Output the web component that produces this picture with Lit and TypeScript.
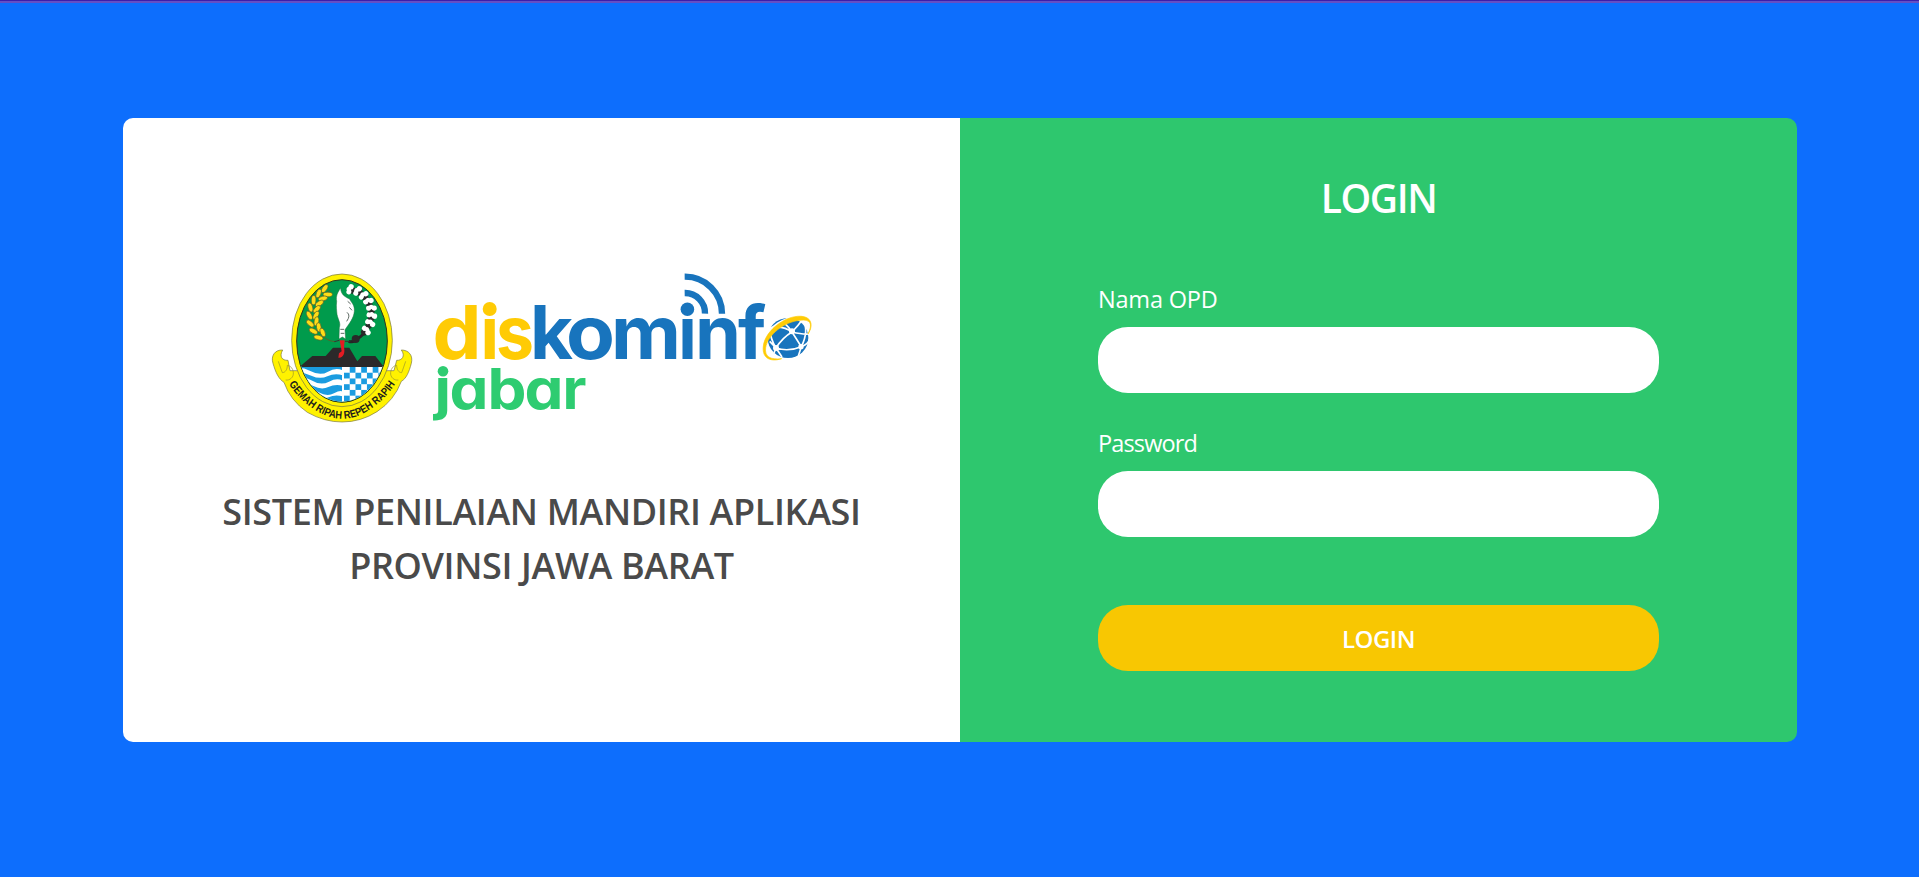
import { LitElement, html, svg, css } from "lit";
import { customElement } from "lit/decorators.js";

/** One letter of the wordmark: character, left edge, width, baseline, font size. */
type Glyph = [string, number, number, number, number];

const YELLOW: Glyph[] = [
  ["d", 432.5, 49, 358.6, 74],
  ["i", 480.5, 18.5, 358.6, 74],
  ["s", 496, 38, 358.6, 74],
];
const BLUE: Glyph[] = [
  ["k", 530, 43, 358.6, 74],
  ["o", 566, 49, 358.6, 74],
  ["m", 611, 70, 358.6, 74],
  ["i", 678.2, 18.5, 358.6, 74],
  ["n", 695, 46, 358.6, 74],
  ["f", 738, 28, 358.6, 74],
];
const GREEN: Glyph[] = [
  ["j", 434.5, 16.5, 409.3, 56],
  ["a", 449.5, 39, 409.3, 56],
  ["b", 487.5, 39, 409.3, 56],
  ["a", 524.5, 39, 409.3, 56],
  ["r", 562.5, 24, 409.3, 56],
];

@customElement("diskominfo-logo")
export class DiskominfoLogo extends LitElement {
  static styles = css`
    :host { display: block; width: 559px; height: 170px; }
    .logo { display: block; width: 100%; height: 100%; }
    .word { font-family: Inter, "Liberation Sans", sans-serif; font-weight: 700; font-feature-settings: "cv11" 1; }
    .yellow { fill: #ffcb05; }
    .blue { fill: #1874bd; }
    .green { fill: #2ecc71; }
    .motto { font-family: "Liberation Sans", sans-serif; font-weight: 700; font-size: 33px; fill: #1d1d1b; }
  `;

  private letters(list: Glyph[], tone: string) {
    return list.map(([ch, x, w, y, size]) => svg`<text class="word ${tone}" x=${x} y=${y}
      font-size=${size} textLength=${w} lengthAdjust="spacingAndGlyphs">${ch}</text>`);
  }

  private checks() {
    const cells = [];
    for (let r = 0; r < 7; r++)
      for (let c = 0; c < 9; c++)
        if ((r + c) % 2 === 1)
          cells.push(svg`<rect x=${246 + c * 17.2} y=${309 + r * 17.2} width="17.2" height="17.2" fill="#1b9ce0"/>`);
    return cells;
  }

  private emblem() {
    const rice = [[190, 84, 62], [174, 98, 50], [162, 116, 30], [154, 136, 15], [152, 157, 0], [155, 178, -20], [164, 198, -35], [178, 215, -50]];
    const cotton = [[268, 78, 20], [290, 84, 35], [307, 98, 50], [320, 116, 70], [328, 137, 85], [328, 159, 100], [322, 181, 115], [309, 202, 135]];
    return svg`<g transform="translate(262 264) scale(.33333)">
      <defs>
        <clipPath id="shield"><ellipse cx="240" cy="231" rx="134" ry="182"/></clipPath>
        <path id="band" d="M80 360Q113 408 155 435Q197 464 240 464Q285 464 325 435Q371 406 406 350"/>
      </defs>
      <path d="M62 258C38 257 26 276 33 298C41 326 50 345 66 355Q85 410 136 445Q187 474 240 474Q297 474 345 443Q397 409 418 352C433 344 441 324 448 298C454 274 440 258 418 258C431 276 420 290 404 289L396 320L84 320L78 289C60 290 51 277 62 258Z"
        fill="#fff200" stroke="#77743a" stroke-width="2"/>
      <ellipse cx="240" cy="229" rx="151" ry="199" fill="#fff200" stroke="#6f7048" stroke-width="2"/>
      <ellipse cx="240" cy="231" rx="136" ry="184" fill="#009b4c" stroke="#31351c" stroke-width="3"/>
      <path d="M49 292Q55 310 61 326C70 326 76 316 76 304Q92 307 94 325C96 340 83 350 71 348M431 292Q425 310 419 326C410 326 404 316 404 304Q388 307 386 325C384 340 397 350 409 348" fill="none" stroke="#99942d" stroke-width="2"/>
      <g clip-path="url(#shield)">
        <rect x="90" y="307" width="300" height="115" fill="#fff"/>
        <rect x="90" y="307" width="150" height="115" fill="#1b9ce0"/>
        <path d="M90 315Q115 305 145 321T198 323T242 319V334Q218 327 196 337T148 335T90 326ZM90 345Q125 334 151 350T201 353T242 350V365Q219 359 199 369T154 366T90 357ZM120 378Q145 371 170 385T216 388T242 384V397Q218 391 200 400T152 397Z" fill="#fff"/>
        ${this.checks()}
        <path d="M112 309L151 276H191L213 251H262L286 292L300 276H340L366 309Z" fill="#2b292a"/>
      </g>
      <path d="M233 229H248L246 250C250 268 244 283 229 281L231 268L239 262Z" fill="#e31b23"/>
      <path d="M236 72C227 85 221 96 224 112C222 129 224 138 225 151C229 170 237 177 232 191L231 225L241 219L251 225L249 197C263 177 275 163 277 142C279 122 266 114 263 105C249 99 236 91 236 72Z" fill="#fff" stroke="#1c713d" stroke-width="1.5"/>
      <path d="M257 112L266 120M262 130L270 139M255 145Q267 154 254 172M235 196H246M236 208H247" fill="none" stroke="#5f6b64" stroke-width="3"/>
      <path d="M205 78C158 104 145 166 179 212Q193 231 220 233" fill="none" stroke="#57612a" stroke-width="3"/>
      ${rice.map(([x, y, a]) => svg`<g transform="translate(${x} ${y}) rotate(${a})" fill="#ffdd17" stroke="#55612b" stroke-width="2">
        <ellipse cx="-10" cy="-3" rx="7" ry="14" transform="rotate(-28 -10 -3)"/>
        <ellipse cx="10" cy="-3" rx="7" ry="14" transform="rotate(28 10 -3)"/></g>`)}
      <path d="M260 232Q272 237 284 226Q331 197 329 143Q323 93 277 76" fill="none" stroke="#252525" stroke-width="9"/>
      ${cotton.map(([x, y, a]) => svg`<g transform="translate(${x} ${y}) rotate(${a})">
        <circle r="10" cx="3" fill="#292929"/>
        <g fill="#fff"><circle cx="-4" cy="-9" r="8"/><circle cx="-5" cy="8" r="7.5"/><circle cx="-8" r="7"/></g></g>`)}
      <circle cx="281" cy="225" r="12" fill="#292929"/>
      <path d="M217 233L232 229M249 232H265" stroke="#333" stroke-width="3"/>
      <text class="motto" textLength="396" lengthAdjust="spacingAndGlyphs"><textPath href="#band">GEMAH RIPAH REPEH RAPIH</textPath></text>
    </g>`;
  }

  private globe() {
    return svg`<g transform="translate(620 260) scale(.33333)" fill="none">
      <path d="M194 50A111 111 0 0 1 306 161M194 99A60 60 0 0 1 255 161" stroke="#1874bd" stroke-width="19"/>
      <ellipse cx="504" cy="234" rx="61" ry="60" fill="#1874bd"/>
      <path d="M449 203Q492 196 516 216Q535 197 548 178M516 216Q549 224 566 222M516 216L544 260Q565 253 569 236M516 216Q487 233 468 264Q505 276 544 260L535 288M492 188Q507 202 516 216M449 244L468 264L462 279M468 264L486 291M449 203Q451 238 468 264M548 178Q568 212 544 260" stroke="#fff" stroke-width="5"/>
      <g fill="#fff"><circle cx="516" cy="214" r="9"/><circle cx="468" cy="264" r="9"/><circle cx="543" cy="260" r="8"/></g>
      <path d="M427 265C432 204 500 157 568 177" stroke="#fff" stroke-width="7"/>
      <path d="M485 296C455 306 425 298 430 258C436 208 505 160 552 170C578 176 578 202 564 222C580 190 570 177 540 181C492 185 443 225 437 263C433 290 451 300 485 296Z" fill="#ffcb05" stroke="#ffcb05" stroke-width="2"/>
    </g>`;
  }

  render() {
    return html`<svg class="logo" viewBox="262 264 559 170" role="img" aria-label="diskominfo jabar">
      ${this.emblem()}
      ${this.letters(YELLOW, "yellow")}
      ${this.letters(BLUE, "blue")}
      ${this.letters(GREEN, "green")}
      <path d="M480 300h18v17h-18zM678 300h19v17h-19zM433 364h17v13h-17z" fill="#fff"/>
      <circle class="yellow" cx="489.7" cy="309" r="7"/>
      <circle class="blue" cx="687.4" cy="309.2" r="6.8"/>
      <circle class="green" cx="443" cy="371.2" r="5.3"/>
      ${this.globe()}
    </svg>`;
  }
}

@customElement("app-root")
export class AppRoot extends LitElement {
  static styles = css`
    :host {
      display: block; box-sizing: border-box; height: 877px; overflow: hidden;
      background: #0d6efd; font-family: "Open Sans", "Noto Sans", sans-serif;
    }
    .edge { height: 1px; background: #3a1fac; border-bottom: 2px solid #654fc4; }
    .card {
      display: grid; grid-template-columns: 837px 837px; width: 1674px; height: 624px;
      margin: 115px 0 0 123px; border-radius: 10px; overflow: hidden;
    }
    .brand { display: flex; flex-direction: column; align-items: center; background: #fff; padding-top: 146px; }
    .title { margin: 51px 0 0; font-size: 36px; line-height: 54px; font-weight: 600; color: #4a4a4a; text-align: center; white-space: nowrap; }
    .line { display: block; letter-spacing: -0.37px; }
    .form { box-sizing: border-box; display: flex; flex-direction: column; background: #2ec76e; padding: 50px 138px 0; color: #fff; }
    .heading { margin: 0; font-size: 39px; line-height: 60px; font-weight: 600; text-align: center; letter-spacing: -1.4px; }
    .label { font-size: 23.5px; line-height: 36px; height: 36px; }
    .first { margin-top: 53px; letter-spacing: -0.2px; }
    .second { margin-top: 32px; letter-spacing: -0.85px; }
    .input { box-sizing: border-box; height: 66px; margin-top: 10px; border: 0; border-radius: 30px; padding: 0 24px; background: #fff; font: inherit; font-size: 24px; outline: none; width: 100%; }
    .button { height: 66px; margin-top: 68px; border: 0; border-radius: 30px; padding: 0; background: #f8c702; color: #fff; font: inherit; font-size: 24px; font-weight: 600; letter-spacing: -0.5px; }
  `;

  render() {
    return html`
      <div class="edge"></div>
      <main class="card">
        <section class="brand">
          <diskominfo-logo></diskominfo-logo>
          <h2 class="title"><span class="line">SISTEM PENILAIAN MANDIRI APLIKASI</span><span class="line">PROVINSI JAWA BARAT</span></h2>
        </section>
        <form class="form">
          <h1 class="heading">LOGIN</h1>
          <label class="label first" for="opd">Nama OPD</label>
          <input class="input" id="opd" type="text" />
          <label class="label second" for="pass">Password</label>
          <input class="input" id="pass" type="password" />
          <button class="button" type="button">LOGIN</button>
        </form>
      </main>`;
  }
}
